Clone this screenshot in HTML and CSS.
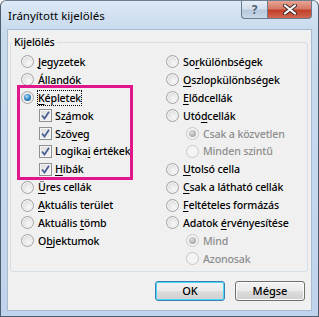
FILE: index.html
```html
<!DOCTYPE html>
<html>
<head>
<meta charset="utf-8">
<link rel="stylesheet" href="styles.css">
</head>
<body>
<div class="window">
  <div class="titlebar">
    <span class="title">Irányított kijelölés</span>
    <div class="caption-btns">
      <div class="cap help">?</div>
      <div class="cap close">
        <svg width="14" height="11" viewBox="0 0 14 11"><path d="M2 1.5 L12 9.5 M12 1.5 L2 9.5" stroke="#3b2a2a" stroke-width="4" stroke-linecap="round"/><path d="M2 1.5 L12 9.5 M12 1.5 L2 9.5" stroke="#fff" stroke-width="2.2" stroke-linecap="round"/></svg>
      </div>
    </div>
  </div>
  <div class="client">
    <fieldset class="group">
      <legend>Kijelölés</legend>
      <div class="cols">
        <div class="col">
          <div class="row"><span class="radio"></span><span class="lbl"><u>J</u>egyzetek</span></div>
          <div class="row"><span class="radio"></span><span class="lbl"><u>Á</u>llandók</span></div>
          <div class="row"><span class="radio on"></span><span class="lbl focus"><u>K</u>épletek</span></div>
          <div class="row sub"><span class="check"><svg width="9" height="9" viewBox="0 0 9 9"><path d="M1 4.5 L3.5 7.5 L8 0.8" fill="none" stroke="#4a5f93" stroke-width="1.8"/></svg></span><span class="lbl">Sz<u>á</u>mok</span></div>
          <div class="row sub"><span class="check"><svg width="9" height="9" viewBox="0 0 9 9"><path d="M1 4.5 L3.5 7.5 L8 0.8" fill="none" stroke="#4a5f93" stroke-width="1.8"/></svg></span><span class="lbl">Szö<u>v</u>eg</span></div>
          <div class="row sub"><span class="check"><svg width="9" height="9" viewBox="0 0 9 9"><path d="M1 4.5 L3.5 7.5 L8 0.8" fill="none" stroke="#4a5f93" stroke-width="1.8"/></svg></span><span class="lbl">Logika<u>i</u> értékek</span></div>
          <div class="row sub"><span class="check"><svg width="9" height="9" viewBox="0 0 9 9"><path d="M1 4.5 L3.5 7.5 L8 0.8" fill="none" stroke="#4a5f93" stroke-width="1.8"/></svg></span><span class="lbl"><u>H</u>ibák</span></div>
          <div class="row"><span class="radio"></span><span class="lbl"><u>Ü</u>res cellák</span></div>
          <div class="row"><span class="radio"></span><span class="lbl"><u>A</u>ktuális terület</span></div>
          <div class="row"><span class="radio"></span><span class="lbl">Aktuális <u>t</u>ömb</span></div>
          <div class="row"><span class="radio"></span><span class="lbl">O<u>b</u>jektumok</span></div>
        </div>
        <div class="col right">
          <div class="row"><span class="radio"></span><span class="lbl">So<u>r</u>különbségek</span></div>
          <div class="row"><span class="radio"></span><span class="lbl"><u>O</u>szlopkülönbségek</span></div>
          <div class="row"><span class="radio"></span><span class="lbl"><u>E</u>lődcellák</span></div>
          <div class="row"><span class="radio"></span><span class="lbl">Utó<u>d</u>cellák</span></div>
          <div class="row sub2 dis"><span class="radio on"></span><span class="lbl">Csak a közvetlen</span></div>
          <div class="row sub2 dis"><span class="radio"></span><span class="lbl">Minden szintű</span></div>
          <div class="row"><span class="radio"></span><span class="lbl"><u>U</u>tolsó cella</span></div>
          <div class="row"><span class="radio"></span><span class="lbl"><u>C</u>sak a látható cellák</span></div>
          <div class="row"><span class="radio"></span><span class="lbl"><u>F</u>eltételes formázás</span></div>
          <div class="row"><span class="radio"></span><span class="lbl">Adatok <u>é</u>rvényesítése</span></div>
          <div class="row sub2 dis"><span class="radio on"></span><span class="lbl">Mind</span></div>
          <div class="row sub2 dis"><span class="radio"></span><span class="lbl">Azonosak</span></div>
        </div>
      </div>
      <div class="highlight"></div>
    </fieldset>
    <div class="buttons">
      <button class="btn default">OK</button>
      <button class="btn">Mégse</button>
    </div>
  </div>
</div>
</body>
</html>
```
FILE: styles.css
```css
* { box-sizing: border-box; }
html, body { margin: 0; padding: 0; background: #fff; }
body { font-family: "Noto Sans", "Open Sans", sans-serif; font-size: 10.6px; font-weight: 500; letter-spacing: -0.15px; color: #000; }

.window {
  width: 319px; height: 317px;
  border: 1px solid #4e5d6e;
  border-top-color: #6f7f92;
  border-radius: 6px 6px 0 0;
  background: linear-gradient(to bottom, #dce8f5 0px, #c9dbee 28px, #bfd4ec 100%);
  display: flex; flex-direction: column;
  padding: 0 6px 5px 6px;
}

.titlebar {
  height: 28px;
  display: flex; align-items: flex-start;
}
.title { font-size: 11.5px; font-weight: 400; letter-spacing: 0; line-height: 16px; padding-top: 7px; padding-left: 1px; color: #000; }
.caption-btns { margin-left: auto; display: flex; }
.cap {
  height: 18px; border: 1px solid #6b7b8f; border-top: none;
  display: flex; align-items: center; justify-content: center;
}
.help {
  width: 26px; border-radius: 0 0 0 4px; border-right: none;
  background: linear-gradient(to bottom, #e6eef7 0%, #d3dfec 45%, #b8c9dc 55%, #c9d8e8 100%);
  color: #506275; font-size: 12px; font-weight: bold; line-height: 16px;
}
.close {
  width: 45px; border-radius: 0 0 4px 0;
  background: linear-gradient(to bottom, #e8a493 0%, #d57a67 45%, #c2402a 55%, #d1664e 100%);
}

.client {
  flex: 1;
  background: #f0f0f0;
  border: 1px solid #a9bbcf;
  display: flex; flex-direction: column;
}

.group {
  margin: 4px 3px 0 2px;
  padding: 0 0 3px 0;
  border: 1px solid #d5dfe5;
  border-radius: 3px;
  position: relative;
  min-width: 0;
}
.group legend { padding: 0 2px; margin-left: 1px; line-height: 16px; }

.cols { display: flex; padding-top: 3px; }
.col { display: flex; flex-direction: column; padding-left: 10px; width: 155px; flex: none; }
.col.right { padding-left: 0; }

.row { height: 17.9px; display: flex; align-items: center; }
.row.sub .check { margin-left: 18px; }
.row.sub2 .radio { margin-left: 20px; }
.lbl { margin-left: 4px; line-height: 16px; white-space: nowrap; }
.lbl u { text-underline-offset: 2px; }
.row.sub .lbl { margin-left: 3px; }
.dis .lbl { color: #8d8d8d; }
.focus { outline: 1px dotted #000; outline-offset: -1px; padding: 0 1px; margin-left: 3px; }

.radio {
  width: 13px; height: 13px; border-radius: 50%;
  border: 1px solid #a4a4a4;
  background: radial-gradient(circle at 60% 65%, #f8f8f8 0%, #e2e2e2 60%, #d0d0d0 100%);
  box-shadow: inset 0 0 0 1px #f2f2f2;
  flex: none; position: relative;
}
.radio.on::after {
  content: ""; position: absolute; left: 2px; top: 2px; width: 7px; height: 7px; border-radius: 50%;
  background: radial-gradient(circle at 40% 35%, #b6e4fb 0%, #3a8fc7 45%, #0e4f7d 100%);
}
.dis .radio { border-color: #c8c8c8; background: #f4f4f4; box-shadow: none; }
.dis .radio.on::after { background: radial-gradient(circle at 40% 35%, #e0e0e0 0%, #a8a8a8 70%, #909090 100%); }

.check {
  width: 13px; height: 13px; border: 1px solid #8e8f8f;
  background: linear-gradient(135deg, #dcdcdc 0%, #f6f6f6 100%);
  box-shadow: inset 0 0 0 1px #f4f4f4;
  display: flex; align-items: center; justify-content: center;
  flex: none;
}
.check svg { display: block; }

.highlight {
  position: absolute; left: 6px; top: 35px; width: 116px; height: 95px;
  border: 3px solid #e1168c;
  pointer-events: none;
}

.buttons {
  margin-top: auto;
  display: flex; justify-content: flex-end; gap: 10px;
  padding: 0 6px 9px 0;
}
.btn {
  width: 70px; height: 20px;
  font-family: inherit; font-size: 11px; font-weight: 500; color: #000;
  border: 1px solid #707070; border-radius: 3px;
  background: linear-gradient(to bottom, #f2f2f2 0%, #ebebeb 48%, #dddddd 52%, #cfcfcf 100%);
  box-shadow: inset 0 0 0 1px #fbfbfb;
  padding: 0; line-height: 16px;
}
.btn.default { border-color: #3c7fb1; box-shadow: inset 0 0 0 1px #48d8fb; }
```
